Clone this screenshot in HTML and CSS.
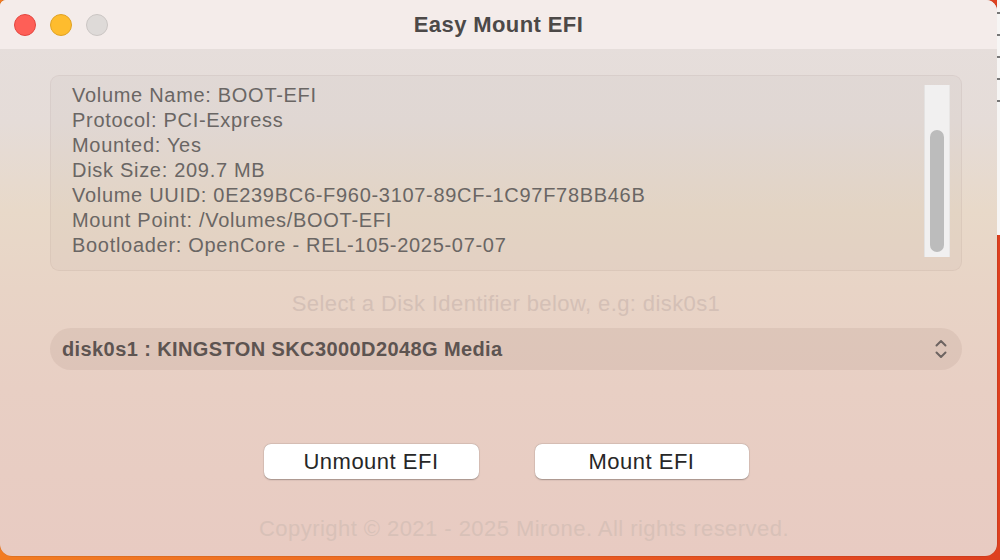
FILE: index.html
```html
<!DOCTYPE html>
<html lang="en">
<head>
<meta charset="utf-8">
<title>Easy Mount EFI</title>
<link rel="stylesheet" href="styles.css">
</head>
<body>
<div class="screen">
  <div class="window">
    <div class="titlebar">
      <div class="lights">
        <span class="light red"></span>
        <span class="light yellow"></span>
        <span class="light gray"></span>
      </div>
      <div class="title">Easy Mount EFI</div>
    </div>
    <div class="content">
      <div class="infobox">
        <div class="info">
          <div>Volume Name: BOOT-EFI</div>
          <div>Protocol: PCI-Express</div>
          <div>Mounted: Yes</div>
          <div>Disk Size: 209.7 MB</div>
          <div>Volume UUID: 0E239BC6-F960-3107-89CF-1C97F78BB46B</div>
          <div>Mount Point: /Volumes/BOOT-EFI</div>
          <div>Bootloader: OpenCore - REL-105-2025-07-07</div>
        </div>
        <div class="scrolltrack"><div class="scrollthumb"></div></div>
      </div>
      <div class="hint">Select a Disk Identifier below, e.g: disk0s1</div>
      <div class="popup">
        <span class="popup-label">disk0s1 : KINGSTON SKC3000D2048G Media</span>
        <svg class="chevrons" width="14" height="22" viewBox="0 0 14 22">
          <path d="M2.5 7.5 L7 3 L11.5 7.5" fill="none" stroke="#6d6461" stroke-width="2" stroke-linecap="round" stroke-linejoin="round"/>
          <path d="M2.5 14.5 L7 19 L11.5 14.5" fill="none" stroke="#6d6461" stroke-width="2" stroke-linecap="round" stroke-linejoin="round"/>
        </svg>
      </div>
      <div class="buttons">
        <button class="btn btn-unmount">Unmount EFI</button>
        <button class="btn btn-mount">Mount EFI</button>
      </div>
      <div class="copyright">Copyright © 2021 - 2025 Mirone. All rights reserved.</div>
    </div>
  </div>
  <div class="side">
    <div class="other-window">
      <span class="mark m1"></span>
      <span class="mark m2"></span>
      <span class="mark m3"></span>
      <span class="mark m4"></span>
      <span class="mark m5"></span>
    </div>
  </div>
</div>
</body>
</html>
```

FILE: styles.css
```css
html, body {
  margin: 0;
  padding: 0;
}

body {
  width: 1000px;
  height: 560px;
  overflow: hidden;
  background: linear-gradient(90deg, #f27c23 0%, #ee6a22 40%, #e44a20 80%, #de401f 100%);
  font-family: "Liberation Sans", Arial, sans-serif;
}

.screen {
  display: flex;
  height: 556px;
}

.window {
  width: 997px;
  height: 556px;
  border-radius: 6px 11px 12px 12px;
  overflow: hidden;
  display: flex;
  flex-direction: column;
  background: linear-gradient(180deg, #e6dfdd 0%, #e5dcd8 22%, #e8d9c9 38%, #e8d4c6 52%, #e8cfc4 70%, #e8cbc2 100%);
  box-shadow: 0 0 0 0.5px rgba(0, 0, 0, 0.15);
}

.side {
  flex: 1;
  display: flex;
  flex-direction: column;
}

.other-window {
  height: 235px;
  background: #f7f6f5;
  display: flex;
  flex-direction: column;
  padding-top: 12px;
  gap: 20px;
  box-sizing: border-box;
}

.mark {
  display: block;
  width: 3px;
  height: 2px;
  background: #777;
}

.titlebar {
  height: 49px;
  flex: none;
  background: #f4ecea;
  display: flex;
  align-items: center;
  position: relative;
}

.lights {
  display: flex;
  gap: 14px;
  padding-left: 14px;
  align-items: center;
}

.light {
  width: 22px;
  height: 22px;
  border-radius: 50%;
  box-sizing: border-box;
}

.red {
  background: #fe5f57;
  border: 1px solid #e3463f;
}

.yellow {
  background: #febc2e;
  border: 1px solid #e0a223;
}

.gray {
  background: #dedad8;
  border: 1px solid #cbc6c4;
}

.title {
  position: absolute;
  left: 0;
  right: 0;
  top: 0;
  height: 49px;
  line-height: 49px;
  text-align: center;
  font-weight: bold;
  font-size: 22px;
  letter-spacing: 0.4px;
  color: #4c4948;
}

.content {
  flex: 1;
  display: flex;
  flex-direction: column;
  padding: 26px 35px 0 50px;
}

.infobox {
  height: 196px;
  box-sizing: border-box;
  display: flex;
  border-radius: 9px;
  background: rgba(120, 90, 80, 0.035);
  border: 1px solid rgba(120, 90, 80, 0.07);
}

.info {
  flex: 1;
  padding: 7px 0 0 21px;
  font-size: 20px;
  line-height: 25px;
  letter-spacing: 0.7px;
  color: #6a6664;
  white-space: nowrap;
  overflow: hidden;
}

.scrolltrack {
  width: 26px;
  margin: 9px 11px 13px 0;
  box-sizing: border-box;
  background: #f1f0f0;
  border-left: 1px solid #e4e2e1;
  border-right: 1px solid #e8e6e5;
  display: flex;
  flex-direction: column;
  padding: 45px 5px 5px 5px;
}

.scrollthumb {
  flex: 1;
  border-radius: 7px;
  background: #bcbcbc;
}

.hint {
  margin-top: 20px;
  height: 26px;
  line-height: 26px;
  font-size: 22px;
  letter-spacing: 0.4px;
  color: #d4c0b6;
  text-align: center;
}

.popup {
  margin-top: 11px;
  height: 42px;
  border-radius: 21px;
  background: rgba(140, 100, 90, 0.11);
  display: flex;
  align-items: center;
  justify-content: space-between;
  padding: 0 14px 0 12px;
}

.popup-label {
  font-size: 20px;
  font-weight: bold;
  letter-spacing: 0.4px;
  color: #5d5451;
}

.chevrons {
  display: block;
}

.buttons {
  margin-top: 74px;
  display: flex;
  justify-content: center;
  gap: 56px;
}

.btn {
  height: 35px;
  width: 215px;
  border: none;
  border-radius: 7px;
  background: #ffffff;
  box-shadow: 0 0.5px 1.5px rgba(0, 0, 0, 0.28), 0 0 0 0.5px rgba(0, 0, 0, 0.06);
  font-family: "Liberation Sans", Arial, sans-serif;
  font-size: 22px;
  letter-spacing: 0.5px;
  color: #272727;
  padding: 0;
}

.btn-mount {
  width: 214px;
}

.copyright {
  margin-top: 37px;
  height: 26px;
  line-height: 26px;
  font-size: 22px;
  letter-spacing: 0.45px;
  color: #d8c1b8;
  text-align: center;
  padding-left: 36px;
}
```
